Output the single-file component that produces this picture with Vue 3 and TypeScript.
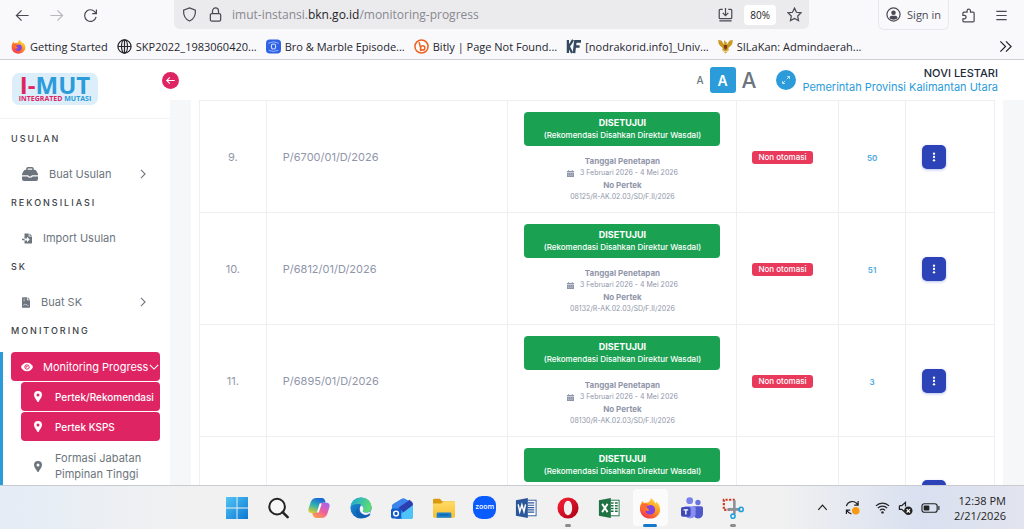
<script setup lang="ts">
interface MenuSection {
  title: string
  label: string
  icon: 'briefcase' | 'import' | 'file'
  expandable: boolean
}

interface Row {
  no: number
  usul: string
  pertek: string
  jumlah: number
}

const bookmarks = [
  { icon: 'firefox', label: 'Getting Started' },
  { icon: 'globe', label: 'SKP2022_1983060420...' },
  { icon: 'marble', label: 'Bro & Marble Episode...' },
  { icon: 'bitly', label: 'Bitly | Page Not Found...' },
  { icon: 'kf', label: '[nodrakorid.info]_Univ...' },
  { icon: 'garuda', label: 'SILaKan: Admindaerah...' },
]

const sections: MenuSection[] = [
  { title: 'USULAN', label: 'Buat Usulan', icon: 'briefcase', expandable: true },
  { title: 'REKONSILIASI', label: 'Import Usulan', icon: 'import', expandable: false },
  { title: 'SK', label: 'Buat SK', icon: 'file', expandable: true },
]

const submenu = [
  { label: 'Pertek/Rekomendasi', active: true },
  { label: 'Pertek KSPS', active: true },
  { label: 'Formasi Jabatan Pimpinan Tinggi', active: false },
]

const rows: Row[] = [
  { no: 9, usul: 'P/6700/01/D/2026', pertek: '08125/R-AK.02.03/SD/F.II/2026', jumlah: 50 },
  { no: 10, usul: 'P/6812/01/D/2026', pertek: '08132/R-AK.02.03/SD/F.II/2026', jumlah: 51 },
  { no: 11, usul: 'P/6895/01/D/2026', pertek: '08130/R-AK.02.03/SD/F.II/2026', jumlah: 3 },
]

const apps = [
  { name: 'Start', icon: 'windows', state: '' },
  { name: 'Search', icon: 'search', state: '' },
  { name: 'Copilot', icon: 'copilot', state: '' },
  { name: 'Edge', icon: 'edge', state: '' },
  { name: 'Outlook', icon: 'outlook', state: '' },
  { name: 'File Explorer', icon: 'folder', state: '' },
  { name: 'Zoom', icon: 'zoom', state: '' },
  { name: 'Word', icon: 'word', state: '' },
  { name: 'Opera', icon: 'opera', state: 'open' },
  { name: 'Excel', icon: 'excel', state: '' },
  { name: 'Firefox', icon: 'firefox', state: 'focused' },
  { name: 'Teams', icon: 'teams', state: '' },
  { name: 'Snipping Tool', icon: 'snip', state: 'open' },
]
</script>

<template>
  <div class="window">
    <svg class="defs" aria-hidden="true">
      <defs>
        <linearGradient id="ff-body" x1="0.8" y1="0" x2="0.2" y2="1">
          <stop offset="0" stop-color="#ffe14a" /><stop offset="0.45" stop-color="#ff9a1f" /><stop offset="1" stop-color="#f5294f" />
        </linearGradient>
        <linearGradient id="win-a" x1="0" y1="0" x2="1" y2="1">
          <stop offset="0" stop-color="#52c5f3" /><stop offset="1" stop-color="#0a78d4" />
        </linearGradient>
        <linearGradient id="edge-a" x1="0" y1="0" x2="1" y2="0.4">
          <stop offset="0" stop-color="#1aa5de" /><stop offset="1" stop-color="#5bdc72" />
        </linearGradient>
        <linearGradient id="edge-b" x1="0" y1="0" x2="1" y2="1">
          <stop offset="0" stop-color="#1b91dd" /><stop offset="1" stop-color="#0b4f9e" />
        </linearGradient>
        <linearGradient id="cop-a" x1="0.6" y1="0" x2="0.2" y2="1">
          <stop offset="0" stop-color="#1a62d8" /><stop offset="0.5" stop-color="#2eb2b0" /><stop offset="1" stop-color="#dfcf2c" />
        </linearGradient>
        <linearGradient id="cop-b" x1="0.8" y1="0" x2="0.2" y2="1">
          <stop offset="0" stop-color="#a566ee" /><stop offset="0.5" stop-color="#ee5f9c" /><stop offset="1" stop-color="#ffa04a" />
        </linearGradient>
        <linearGradient id="fold-a" x1="0" y1="0" x2="0" y2="1">
          <stop offset="0" stop-color="#ffdc68" /><stop offset="1" stop-color="#f8bf31" />
        </linearGradient>
        <linearGradient id="opera-a" x1="0" y1="0" x2="1" y2="1">
          <stop offset="0" stop-color="#ff2138" /><stop offset="1" stop-color="#a70014" />
        </linearGradient>
        <symbol id="firefox" viewBox="0 0 24 24">
          <path d="M13 1c3 2 4 4 5 6 1-.2 1-1 .8-2C22 8 24 12 22.600 16.500 21 21 17 23.500 12 23.500 5.500 23.500 1 19 1 12.500 1 9 2.500 6 4.500 4c0 1.500.4 2.500 1.200 3 1-.8 2.300-1 3.600-.8C11.500 5.500 12.600 3.500 13 1z" fill="url(#ff-body)" />
          <path d="M2 9c2-2 5-2.600 8-.8 1 .8 0 2.200-1.600 2.600C6 11.200 6.300 14 8 16c-3 0-5-3-6-7z" fill="#ff6b2c" />
          <path d="M10 9.500c3-2 7.500-.2 7.500 4 0 3.500-2.500 5.700-5.500 5.700s-5.200-2-5-4.500c1.700 1.200 3.500.7 4.700-.4C10 13 8.500 12 8 11c.6-.6 1.200-1.200 2-1.500z" fill="#8145df" />
        </symbol>
      </defs>
    </svg>

    <header class="browser">
      <div class="toolbar">
        <button class="tool" aria-label="Kembali">
          <svg viewBox="0 0 16 16" class="i16"><path d="M14.500 8h-13M7 2.500 1.500 8 7 13.500" /></svg>
        </button>
        <button class="tool dim" aria-label="Maju">
          <svg viewBox="0 0 16 16" class="i16"><path d="M1.500 8h13M9 2.500 14.500 8 9 13.500" /></svg>
        </button>
        <button class="tool" aria-label="Muat ulang">
          <svg viewBox="0 0 16 16" class="i16"><path d="M13.800 6A6.200 6.200 0 1 0 14 9.500M14.300 1.500V6H9.800" /></svg>
        </button>
        <div class="urlbar">
          <svg viewBox="0 0 16 16" class="i16"><path d="M8 1 14.300 3.300c.3 5-1.500 9.500-6.300 11.700C3.200 12.800 1.400 8.300 1.700 3.300z" /></svg>
          <svg viewBox="0 0 16 16" class="i16"><rect x="2.500" y="7" width="11" height="8" rx="1.500" /><path d="M4.800 7V4.200a3.200 3.200 0 0 1 6.400 0V7" /></svg>
          <div class="address" role="textbox" aria-label="Alamat" contenteditable="true">imut-instansi.<b>bkn.go.id</b>/monitoring-progress</div>
          <button class="tool" aria-label="Pasang">
            <svg viewBox="0 0 16 16" class="i16"><path d="M5 2.500H2.300q-1 0-1 1v8q0 1 1 1h11.400q1 0 1-1v-8q0-1-1-1H11M8 1v8M5 6.300 8 9.300l3-3M1.500 14.700h13" /></svg>
          </button>
          <button class="zoomchip">80%</button>
          <button class="tool" aria-label="Tandai">
            <svg viewBox="0 0 16 16" class="i16"><path d="m8 1.200 2.100 4.400 4.800.6-3.500 3.400.9 4.900L8 12.100l-4.300 2.400.9-4.900L1.100 6.200l4.800-.6z" /></svg>
          </button>
        </div>
        <button class="signin">
          <svg viewBox="0 0 16 16" class="i16"><circle cx="8" cy="8" r="7" /><circle cx="8" cy="6" r="2.400" fill="currentColor" stroke="none" /><path d="M3.700 12q0-2.800 2.500-2.800h3.600q2.500 0 2.500 2.800c-2 2-6.600 2-8.600 0z" fill="currentColor" stroke="none" /></svg>
          Sign in
        </button>
        <button class="tool ext" aria-label="Ekstensi">
          <svg viewBox="0 0 16 16" class="i16"><path d="M2 5.500q0-1 1-1h3.500V3a1.800 1.800 0 0 1 3.600 0v1.500H13q1 0 1 1v8.200q0 1-1 1H3q-1 0-1-1v-2.200h1.600a1.800 1.800 0 0 0 0-3.600H2z" /></svg>
        </button>
        <button class="tool menu" aria-label="Menu">
          <svg viewBox="0 0 16 16" class="i16"><path d="M2.500 3.500h11M2.500 8h11M2.500 12.500h11" /></svg>
        </button>
      </div>
      <nav class="bookmarks">
        <a v-for="b in bookmarks" :key="b.label" href="#">
          <svg v-if="b.icon === 'firefox'" class="i15"><use href="#firefox" /></svg>
          <svg v-else-if="b.icon === 'globe'" viewBox="0 0 16 16" class="i15 line"><circle cx="8" cy="8" r="7" /><ellipse cx="8" cy="8" rx="3.200" ry="7" /><path d="M1 8h14M8 1v14" /></svg>
          <svg v-else-if="b.icon === 'marble'" viewBox="0 0 16 16" class="i15"><rect width="16" height="15" y="0.500" rx="4" fill="#2f62e6" /><path d="M2.500 4.500 8 3l5.500 1.500M3 12q5 2.500 10 0" fill="none" stroke="#9dbbff" /><rect x="5.800" y="5.300" width="4.400" height="5.400" rx="2" fill="none" stroke="#cfddff" stroke-width="1.200" /></svg>
          <svg v-else-if="b.icon === 'bitly'" viewBox="0 0 16 16" class="i15"><circle cx="8" cy="8" r="7" fill="#fff" stroke="#ee6123" stroke-width="1.600" /><path d="M5.500 3.500 7 9.500M7 9.500c0 3 4.500 3 4.500 0s-4-3-4.500 0q-.5 2 .5 3.500" fill="none" stroke="#ee6123" stroke-width="1.600" /></svg>
          <svg v-else-if="b.icon === 'kf'" viewBox="0 0 16 16" class="i15"><path d="M2 1v14M7.500 1 3 8l3.500 7" fill="none" stroke="#34495e" stroke-width="2.400" /><path d="M8.500 15 10 2.500h6M9.500 8h5" fill="none" stroke="#34495e" stroke-width="2.800" /></svg>
          <svg v-else viewBox="0 0 16 16" class="i15"><path d="M8 3Q6.800.5 6.400 2.500L6.700 6 3.500 1.500.3 1q-.4 4 2.200 6.500L5 9.500 4.500 12 8 15.500l3.500-3.500-.5-2.500 2.500-2q2.600-2.500 2.200-6.500l-3.200.5L9.300 6V3.500z" fill="#c9981f" /><path d="M6.300 6.500h3.400v3L8 11.500 6.300 9.500z" fill="#7c3b17" /><path d="m5 12.500 3 1 3-1" stroke="#f4eec8" fill="none" /></svg>
          {{ b.label }}
        </a>
        <button class="tool more" aria-label="Markah lainnya">
          <svg viewBox="0 0 16 16" class="i16"><path d="m2.500 2.500 5.500 5.500-5.500 5.500M8.500 2.500l5.500 5.500-5.500 5.500" /></svg>
        </button>
      </nav>
    </header>

    <div class="page">
      <aside class="sidebar">
        <div class="brand">
          <a href="#" class="logo">
            <span class="big"><i>I-</i>MUT</span>
            <span class="small"><i>INTEGRATED</i> MUTASI</span>
          </a>
          <button class="collapse" aria-label="Tutup menu">
            <svg viewBox="0 0 16 16"><path d="M14 8H2.500M7 3.500 2.500 8 7 12.500" /></svg>
          </button>
        </div>
        <nav class="sidenav">
          <template v-for="s in sections" :key="s.title">
            <h2>{{ s.title }}</h2>
            <a href="#" class="item">
              <svg v-if="s.icon === 'briefcase'" viewBox="0 0 16 14" class="bag"><path d="M5 3V1.800Q5 .8 6 .8h4q1 0 1 1V3" fill="none" stroke="currentColor" stroke-width="1.500" /><path d="M3.500 2.700h9q1 0 1.600.9L15.500 6q.5.800.5 1.600v.6H9.800a1.900 1.900 0 0 1-3.600 0H0v-.6Q0 6.800.5 6l1.400-2.400q.6-.9 1.600-.9zM0 9.500h5.300q2.700 2.500 5.400 0H16v2.500q0 2-2 2H2q-2 0-2-2z" /></svg>
              <svg v-else-if="s.icon === 'import'" viewBox="0 0 12 12" class="imp"><path d="M3 0h5v3.500h4V11q0 1-1 1H4q-1 0-1-1V8.500h3v2L9.300 7.200 6 4v2H3zM9 0l3 2.700H9zM0 6.300h3v1.800H0z" /></svg>
              <svg v-else viewBox="0 0 9 12" class="doc"><path d="M1 0h4.500v3.500H9V11q0 1-1 1H1q-1 0-1-1V1q0-1 1-1zM6.300 0 9 2.700H6.300z" /><path d="m1.500 9.500 1.500-2 1 1.500.8-1 1 1.300h1.700M1.500 2h2M1.500 4h2" stroke="#fff" fill="none" stroke-width=".6" /></svg>
              <span>{{ s.label }}</span>
              <svg v-if="s.expandable" viewBox="0 0 12 12" class="chev"><path d="m3.500 1 5 5-5 5" /></svg>
            </a>
          </template>
          <h2>MONITORING</h2>
          <div class="group">
            <a href="#" class="parent">
              <svg viewBox="0 0 14 10" class="eye"><path d="M7 0c3.500 0 5.800 2 7 5-1.200 3-3.500 5-7 5S1.200 8 0 5c1.200-3 3.500-5 7-5z" fill="#fff" /><circle cx="7" cy="5" r="2.600" fill="none" stroke="#df2463" stroke-width="1.100" /><path d="M7 3.300V5H5.300" stroke="#df2463" fill="none" stroke-width="1.100" /></svg>
              <span>Monitoring Progress</span>
              <svg viewBox="0 0 12 12" class="chev"><path d="m1 3.500 5 5 5-5" /></svg>
            </a>
            <a v-for="m in submenu" :key="m.label" href="#" class="sub" :class="{ active: m.active }">
              <svg viewBox="0 0 8 11" class="pin"><path fill-rule="evenodd" d="M4 0a4 4 0 0 1 4 4c0 2.500-2.500 4.500-3.200 6.500q-.8 1-1.600 0C2.500 8.500 0 6.500 0 4a4 4 0 0 1 4-4zm0 2.500a1.500 1.500 0 1 0 0 3 1.500 1.500 0 0 0 0-3z" /></svg>
              <span>{{ m.label }}</span>
            </a>
          </div>
        </nav>
      </aside>

      <div class="main">
        <header class="topbar">
          <div class="sizes">
            <button class="s">A</button>
            <button class="m">A</button>
            <button class="l">A</button>
          </div>
          <button class="full" aria-label="Layar penuh">
            <svg viewBox="0 0 12 12"><path d="M7 5l3-3M7.300 1.800h2.900v2.900M5 7l-3 3M1.800 7.300v2.900h2.900" /></svg>
          </button>
          <div class="user">
            <strong>NOVI LESTARI</strong>
            <a href="#">Pemerintah Provinsi Kalimantan Utara</a>
          </div>
        </header>
        <main class="content">
          <div class="card">
            <table>
              <colgroup>
                <col class="c-no" /><col class="c-usul" /><col class="c-status" /><col class="c-jenis" /><col class="c-jml" /><col class="c-aksi" />
              </colgroup>
              <tbody>
                <tr v-for="r in rows" :key="r.no">
                  <td class="center">{{ r.no }}.</td>
                  <td class="usul">{{ r.usul }}</td>
                  <td class="status">
                    <button class="approved">
                      <b>DISETUJUI</b>
                      <span>(Rekomendasi Disahkan Direktur Wasdal)</span>
                    </button>
                    <div class="detail">
                      <b>Tanggal Penetapan</b>
                      <span><svg viewBox="0 0 8 8"><path d="M0 1h1.500V0h1v1h3V0h1v1H8v1.500H0zM0 3h8v5H0z" /><path d="M1 4.600h6M1 6.300h6" stroke="#fff" stroke-width=".4" stroke-dasharray="1.500 .6" /></svg>3 Februari 2026 - 4 Mei 2026</span>
                      <b>No Pertek</b>
                      <span>{{ r.pertek }}</span>
                    </div>
                  </td>
                  <td class="jenis"><span class="badge">Non otomasi</span></td>
                  <td class="center"><a href="#" class="count">{{ r.jumlah }}</a></td>
                  <td class="aksi">
                    <button class="dots" aria-label="Aksi">
                      <svg viewBox="0 0 4 12"><circle cx="2" cy="2" r="1.400" /><circle cx="2" cy="6" r="1.400" /><circle cx="2" cy="10" r="1.400" /></svg>
                    </button>
                  </td>
                </tr>
                <tr class="next">
                  <td></td>
                  <td></td>
                  <td class="status">
                    <button class="approved">
                      <b>DISETUJUI</b>
                      <span>(Rekomendasi Disahkan Direktur Wasdal)</span>
                    </button>
                  </td>
                  <td></td>
                  <td></td>
                  <td>
                    <button class="dots" aria-label="Aksi"></button>
                  </td>
                </tr>
              </tbody>
            </table>
          </div>
        </main>
      </div>
    </div>

    <footer class="taskbar">
      <nav class="apps">
        <button v-for="a in apps" :key="a.name" :aria-label="a.name" :class="a.state">
          <svg v-if="a.icon === 'windows'" viewBox="0 0 24 24"><path d="M0 0h11.500v11.500H0zM12.500 0H24v11.500H12.500zM0 12.500h11.500V24H0zM12.500 12.500H24V24H12.500z" fill="url(#win-a)" /></svg>
          <svg v-else-if="a.icon === 'search'" viewBox="0 0 24 24"><circle cx="11" cy="10.500" r="8.500" fill="#f7f7f7" stroke="#242424" stroke-width="2.200" /><path d="m17 16.500 5.500 5.500" stroke="#242424" stroke-width="2.800" stroke-linecap="round" /></svg>
          <svg v-else-if="a.icon === 'copilot'" viewBox="0 0 24 24"><path d="M9 1h6.500q2.500 0 3.200 3l.6 2.300h-3q-2 0-2.700 2.500L11 17.500H3.500C0 17.500 0 14 1 11.500l2-6Q4.800 1 9 1z" fill="url(#cop-a)" /><path d="M15 23H8.500Q6 23 5.300 20l-.6-2.500h3q2 0 2.700-2.500L13 6.300h7.500c3.500 0 3.500 3.500 2.500 6l-2 6.200Q19.200 23 15 23z" fill="url(#cop-b)" /><path d="m12.800 7-3.200 10h2.200L15 7z" fill="#fff" /></svg>
          <svg v-else-if="a.icon === 'edge'" viewBox="0 0 24 24"><circle cx="12" cy="12" r="11.500" fill="url(#edge-b)" /><path d="M.6 10.500C1.500 4.500 6 .5 12 .5 18.500.5 23.500 5 23.500 11c0 4-2.500 6-6 6-2.500 0-4-1-3.200-2.300C16 12 14 7.500 9 7.500c-4 0-7 1.500-8.400 3z" fill="url(#edge-a)" /><path d="M9 12.500c-1.500 5 3.500 8.500 8.500 7.500q3-.8 4.500-1.500.8.300-.5 1.700c-4 4-11 3.500-14-1-2.300-3.500-.5-6.500 1.500-6.700z" fill="#135fb4" /><path d="M12 9c2.500 1 3.500 3.500 2.300 5.500-1 1.500.5 2.500 3.200 2.500 2.500 0 4.500-.8 5.500-2.500-.5 3-2.500 5-6 5C12 19.500 8.500 14 12 9z" fill="#f1f5f8" /></svg>
          <svg v-else-if="a.icon === 'outlook'" viewBox="0 0 24 24"><path d="M1 10Q1 8.500 2.500 7.500L12 2q1.500-1 3 0l7.500 4.500Q24 7.500 24 9v12q0 3-3 3H6l-5-5z" fill="#2f8eea" /><path d="m8 11.500 12-8.500 3 2.500q1 1 1 3L14 17z" fill="#2b3fb0" /><path d="M11 18.500 24 9v12q0 3-3 3h-9z" fill="#4fc3f8" /><path d="M1 10Q1 8.500 2.500 7.500L12 2q1.500-1 3 0l4 2-11.500 8z" fill="#3d83ee" /><rect y="12.500" width="11" height="11" rx="2" fill="#1457c6" /><circle cx="5.500" cy="18" r="2.600" fill="none" stroke="#fff" stroke-width="1.600" /></svg>
          <svg v-else-if="a.icon === 'folder'" viewBox="0 0 24 24"><path d="M0 3.500Q0 2 1.500 2h6L10 4.500h12.500Q24 4.500 24 6v6H0z" fill="#d99a10" /><path d="M0 7h9l2.500-2.500h11Q24 4.500 24 6v15q0 1.500-1.500 1.500h-21Q0 22.500 0 21z" fill="url(#fold-a)" /><path d="M4 22.500v-4Q4 17 5.500 17h13q1.500 0 1.500 1.500v4z" fill="#1780cf" /><path d="M7 19.500h10" stroke="#0b5c9f" stroke-width="1.200" /></svg>
          <span v-else-if="a.icon === 'zoom'" class="zoomapp">zoom</span>
          <svg v-else-if="a.icon === 'word' || a.icon === 'excel'" viewBox="0 0 24 24" :class="a.icon">
            <rect x="12" y="3.500" width="11" height="17" fill="#fff" stroke="currentColor" />
            <path v-if="a.icon === 'word'" d="M14 6.500h7M14 9h7M14 11.500h7M14 14h7M14 16.500h7" stroke="currentColor" stroke-width="1.300" />
            <path v-else d="M14 6.500h3M14 9.500h3M14 12.500h3M14 15.500h3M18.500 6.500h3M18.500 9.500h3M18.500 12.500h3M18.500 15.500h3" stroke="currentColor" stroke-width="1.700" />
            <path d="M1 3.500 14 1v22L1 20.500z" fill="currentColor" />
            <path v-if="a.icon === 'word'" d="m3.500 8 1.700 8L7.500 8.500 9.800 16l1.700-8" fill="none" stroke="#fff" stroke-width="1.600" />
            <path v-else d="m4.500 7.500 6 9M10.500 7.500l-6 9" fill="none" stroke="#fff" stroke-width="2" />
          </svg>
          <svg v-else-if="a.icon === 'opera'" viewBox="0 0 24 24"><path fill-rule="evenodd" d="M12 .5a11.500 11.500 0 1 1 0 23 11.500 11.500 0 0 1 0-23zm0 3.700c-2.800 0-4.500 3.500-4.500 7.800s1.700 7.800 4.500 7.800 4.500-3.500 4.500-7.800S14.800 4.200 12 4.200z" fill="url(#opera-a)" /></svg>
          <svg v-else-if="a.icon === 'firefox'"><use href="#firefox" /></svg>
          <svg v-else-if="a.icon === 'teams'" viewBox="0 0 24 24"><circle cx="9.500" cy="4" r="3.700" fill="#7a83ec" /><circle cx="18.500" cy="6" r="2.900" fill="#6873df" /><path d="M13 10h9q2 0 2 2v6c0 7-10 7-10 1z" fill="#5059c9" /><path d="M4 10h10q2 0 2 2v6c0 7-12 7-12 0z" fill="#8790f2" /><rect y="11" width="10.500" height="10.500" rx="2" fill="#4049b8" /><path d="M2.800 14h5M5.300 14v5" stroke="#fff" stroke-width="1.500" /></svg>
          <svg v-else viewBox="0 0 24 24"><path d="M14 3H2v11h9" fill="none" stroke="#cf3a26" stroke-width="2.400" stroke-dasharray="2.400 1.500" /><path d="M13.500 3.500v15M6 13.500h14" stroke="#8a9096" stroke-width="2.800" /><circle cx="20.800" cy="13.500" r="2.300" fill="none" stroke="#1ea0db" stroke-width="1.700" /><circle cx="12" cy="21" r="2.300" fill="none" stroke="#1ea0db" stroke-width="1.700" /></svg>
        </button>
      </nav>
      <div class="tray">
        <svg viewBox="0 0 16 16" class="i16"><path d="m3.500 10.500 4.500-5 4.500 5" /></svg>
        <svg viewBox="0 0 16 16" class="i16 sync"><path d="M1.500 6.500a6.500 6.500 0 0 1 12-1.500M14 1v4.500H9.800M1.500 15v-4.200h4M1.800 11q1.500 3 5 3.700" /><circle cx="11.500" cy="11.500" r="4" fill="#f79a10" stroke="none" /></svg>
        <svg viewBox="0 0 16 16" class="i16"><path d="M1 6.200a10 10 0 0 1 14 0M3 8.600a7 7 0 0 1 10 0M5.200 11a4 4 0 0 1 5.600 0" /><circle cx="8" cy="13.200" r="1.300" fill="currentColor" stroke="none" /></svg>
        <svg viewBox="0 0 16 16" class="i16"><path d="M1.500 6v4h2.500l3.500 3M1.500 6H4l4-3.500V7" /><circle cx="11" cy="11.500" r="4.500" fill="#222" stroke="none" /><path d="m9.200 9.700 3.600 3.600M12.800 9.700l-3.600 3.600" class="white" /></svg>
        <svg viewBox="0 0 20 12" class="battery"><rect x="1" y="1.500" width="16" height="9" rx="2.500" /><rect x="2.800" y="3.300" width="6" height="5.400" rx="1" fill="currentColor" stroke="none" /><path d="M18.800 4v4" /></svg>
        <time>12:38 PM<br />2/21/2026</time>
      </div>
    </footer>
  </div>
</template>

<style>
body {
  margin: 0;
}
</style>

<style scoped>
.window {
  display: flex;
  flex-direction: column;
  height: 100vh;
  overflow: hidden;
  background: #fff;
  font-family: Inter, "Liberation Sans", sans-serif;
  font-size: 11px;
}
.window * {
  box-sizing: border-box;
}
.defs {
  position: absolute;
  width: 0;
  height: 0;
}
button {
  border: 0;
  padding: 0;
  margin: 0;
  background: none;
  font: inherit;
  color: inherit;
}
a {
  color: inherit;
  text-decoration: none;
}
svg {
  display: block;
  flex: none;
}
.i16,
.i15.line {
  fill: none;
  stroke: currentColor;
  stroke-width: 1.3;
}
.i16 {
  width: 15px;
  height: 15px;
}
.i15 {
  width: 15px;
  height: 15px;
}

/* browser chrome */
.browser {
  flex: none;
  background: #f9f9fb;
  border-bottom: 1px solid #cfcfd1;
  font-family: "Open Sans", "Noto Sans", sans-serif;
  color: #4a4a55;
}
.toolbar {
  display: flex;
  align-items: center;
  height: 30px;
  padding: 0 15px;
  gap: 19px;
}
.tool.dim {
  color: #b8b8be;
}
.urlbar {
  flex: 1;
  display: flex;
  align-items: center;
  align-self: stretch;
  gap: 11px;
  margin: 0 50px 1px 57px;
  padding: 0 7px 0 8px;
  border-radius: 0 0 6px 6px;
  background: #ebebed;
}
.address {
  flex: 1;
  margin-left: -2px;
  font-size: 12px;
  line-height: 20px;
  color: #88888f;
  white-space: nowrap;
}
.address b {
  font-weight: 400;
  color: #1f1f29;
}
.zoomchip {
  width: 32px;
  height: 20px;
  border-radius: 4px;
  background: #fff;
  font-size: 10px;
  color: #222;
}
.signin {
  display: flex;
  align-items: center;
  align-self: stretch;
  gap: 6px;
  height: 30px;
  padding: 0 7px;
  border: 1px solid #e8e8ec;
  border-top: 0;
  border-radius: 0 0 6px 6px;
  font-size: 11px;
  margin-right: -7px;
}
.ext {
  margin-right: -1px;
}
.bookmarks {
  display: flex;
  align-items: center;
  height: 29px;
  padding: 3px 11px 0;
  gap: 9px;
  font-size: 11px;
  color: #26262e;
}
.bookmarks a {
  display: flex;
  align-items: center;
  gap: 4px;
  white-space: nowrap;
}
.more {
  margin-left: auto;
}

/* page */
.page {
  flex: 1;
  display: flex;
  min-height: 0;
}
.sidebar {
  flex: none;
  display: flex;
  flex-direction: column;
  width: 170px;
  color: #6c757d;
}
.brand {
  position: relative;
  height: 59px;
  padding: 13px 12px;
  border-bottom: 1px solid #f3f3f4;
}
.logo {
  display: flex;
  flex-direction: column;
  align-items: center;
  width: 86px;
  height: 32px;
  border-radius: 7px;
  background: #dbeefa;
  color: #2b9bd9;
  font-family: "Open Sans", sans-serif;
  font-weight: 700;
}
.logo i {
  font-style: normal;
  color: #df2463;
}
.big {
  font-size: 24px;
  line-height: 23px;
}
.small {
  font-size: 7px;
  line-height: 6px;
}
.collapse {
  position: absolute;
  top: 12px;
  right: -9px;
  width: 17px;
  height: 17px;
  border-radius: 50%;
  background: #df2463;
}
.collapse svg {
  width: 11px;
  height: 11px;
  margin: auto;
  fill: none;
  stroke: #fff;
  stroke-width: 1.6;
}
.sidenav {
  flex: 1;
  display: flex;
  flex-direction: column;
  padding-top: 12px;
}
h2 {
  margin: 0 0 13px;
  padding-left: 11px;
  font-size: 9px;
  font-weight: 500;
  line-height: 16px;
  letter-spacing: 2px;
  color: #3c4248;
}
.item {
  display: flex;
  align-items: center;
  gap: 11px;
  height: 28px;
  margin-bottom: 7px;
  padding: 0 22px;
  fill: currentColor;
}
.bag {
  width: 16px;
  height: 14px;
}
.imp {
  width: 10px;
  height: 11px;
}
.doc {
  width: 8px;
  height: 11px;
}
.chev {
  width: 10px;
  height: 10px;
  fill: none;
  stroke: currentColor;
  stroke-width: 1.3;
}
.item .chev {
  margin-left: auto;
}
.group {
  flex: 1;
  display: flex;
  flex-direction: column;
  gap: 1px;
  padding: 0 10px 0 8px;
  border-left: 3px solid #2b9bd9;
}
.parent,
.sub {
  display: flex;
  align-items: center;
  min-height: 29px;
  border-radius: 4px;
  line-height: 16px;
}
.parent {
  padding-left: 10px;
  background: #df2463;
  color: #fff;
  white-space: nowrap;
}
.parent span {
  margin: 0 1px 0 10px;
}
.eye {
  width: 12px;
  height: 10px;
}
.sub {
  gap: 13px;
  margin-left: 10px;
  padding-left: 13px;
  fill: currentColor;
}
.sub.active {
  background: #df2463;
  color: #fff;
  font-size: 10px;
  font-weight: 500;
  white-space: nowrap;
}
.sub:not(.active) {
  margin-top: 8px;
}
.pin {
  width: 8px;
  height: 11px;
}
.main {
  flex: 1;
  display: flex;
  flex-direction: column;
  min-width: 0;
}
.topbar {
  flex: none;
  display: flex;
  align-items: center;
  justify-content: flex-end;
  height: 40px;
  padding-right: 26px;
}
.sizes {
  display: flex;
  align-items: center;
  gap: 6px;
  color: #6c757d;
  font-weight: 500;
}
.s {
  font-size: 10px;
}
.m {
  width: 26px;
  height: 26px;
  border-radius: 3px;
  background: #2b9bd9;
  color: #fff;
  font-size: 14px;
  font-weight: 600;
}
.l {
  font-size: 21px;
}
.full {
  width: 20px;
  height: 20px;
  margin: 0 6px 0 20px;
  border-radius: 50%;
  background: #2b9bd9;
}
.full svg {
  width: 10px;
  height: 10px;
  margin: auto;
  fill: none;
  stroke: #d8effc;
}
.user {
  display: flex;
  flex-direction: column;
  align-items: flex-end;
  line-height: 14px;
}
.user strong {
  font-weight: 500;
  color: #212a3a;
}
.user a {
  color: #2b9bd9;
}
.content {
  flex: 1;
  min-height: 0;
  overflow: hidden;
  padding: 0 21px;
  background: #f5f7f9;
}
.card {
  padding: 0 8px;
  background: #fff;
}
table {
  width: 100%;
  table-layout: fixed;
  border-spacing: 0;
  border-top: 1px solid #efeff1;
  border-left: 1px solid #efeff1;
  color: #9096aa;
}
.c-no,
.c-jml {
  width: 8.4%;
}
.c-usul {
  width: 30.4%;
}
.c-status {
  width: 28.8%;
}
.c-jenis {
  width: 12.8%;
}
.c-aksi {
  width: 11.2%;
}
td {
  padding: 0 16px;
  border-right: 1px solid #efeff1;
  border-bottom: 1px solid #efeff1;
}
.center {
  text-align: center;
}
.status {
  padding: 11px 16px 9px;
}
.next td {
  height: 112px;
  vertical-align: top;
}
.next .dots {
  margin-top: 43px;
}
.approved {
  display: flex;
  flex-direction: column;
  justify-content: center;
  align-items: center;
  width: 100%;
  height: 34px;
  border-radius: 4px;
  background: #1ba152;
  color: #fff;
  line-height: 13px;
  white-space: nowrap;
}
.approved b {
  font-size: 9px;
}
.approved span {
  font-size: 8px;
  font-weight: 500;
}
.detail {
  display: flex;
  flex-direction: column;
  align-items: center;
  margin-top: 9px;
  line-height: 12px;
  font-size: 7px;
  white-space: nowrap;
}
.detail b {
  font-size: 8px;
  font-weight: 700;
}
.detail span {
  display: flex;
  align-items: center;
  gap: 6px;
}
.detail svg {
  width: 7px;
  height: 7px;
  fill: currentColor;
}
.jenis {
  padding: 0 15px;
}
.badge {
  display: inline-block;
  padding: 0 6px;
  border-radius: 3px;
  background: #e93a5c;
  color: #fff;
  font-size: 8px;
  font-weight: 500;
  line-height: 13px;
  white-space: nowrap;
}
.count {
  font-size: 8px;
  font-weight: 600;
  color: #4aa9e0;
}
.dots {
  display: block;
  width: 24px;
  height: 24px;
  border-radius: 5px;
  background: #2c43b8;
  box-shadow: 0 1px 3px #b9c2ec;
}
.dots svg {
  width: 4px;
  height: 10px;
  margin: auto;
  fill: #fff;
}

/* taskbar */
.taskbar {
  flex: none;
  display: flex;
  align-items: center;
  height: 44px;
  border-top: 1px solid #c9cbd0;
  background: linear-gradient(90deg, #e4ecf6, #f1f1f1 18%, #f1f1f1 76%, #d9e0f0 90%, #e2e4ee);
  font-family: "Open Sans", "Noto Sans", sans-serif;
}
.apps {
  display: flex;
  align-self: stretch;
  width: 52.5%;
  margin-left: 21.1%;
  padding: 3px 0;
}
.apps button {
  flex: 1;
  position: relative;
  display: flex;
  align-items: center;
  justify-content: center;
  margin: 0 3px;
  border-radius: 4px;
}
.apps svg {
  width: 22px;
  height: 22px;
}
.apps .focused {
  background: #fbfbfb;
}
.apps .open::after,
.apps .focused::after {
  content: "";
  position: absolute;
  bottom: -1px;
  left: calc(50% - 3px);
  width: 6px;
  height: 3px;
  border-radius: 2px;
  background: #8b8b8b;
}
.apps .focused::after {
  left: calc(50% - 7px);
  width: 14px;
  background: #1479cc;
}
.zoomapp {
  width: 23px;
  height: 23px;
  border-radius: 9px;
  background: #0b5cff;
  color: #fff;
  font-size: 7px;
  font-weight: 600;
  line-height: 21px;
}
.word {
  color: #2b579a;
}
.excel {
  color: #1f7244;
}
.tray {
  display: flex;
  align-items: center;
  gap: 8px;
  margin-left: auto;
  padding-right: 18px;
  color: #222;
}
.sync {
  margin: 0 7px;
}
.white {
  stroke: #fff;
}
.battery {
  width: 19px;
  height: 12px;
  fill: none;
  stroke: currentColor;
  stroke-width: 1.2;
}
time {
  margin-left: 6px;
  font-size: 11px;
  line-height: 15px;
  text-align: right;
}
</style>
